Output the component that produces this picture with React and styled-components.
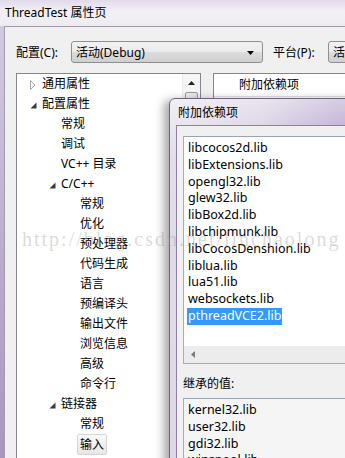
import React from 'react';
import styled, { createGlobalStyle } from 'styled-components';

const GlobalStyle = createGlobalStyle`
  html, body {
    margin: 0;
    padding: 0;
  }
  body {
    font-family: "Noto Sans", "Noto Sans CJK SC", sans-serif;
    font-size: 12px;
    color: #000000;
  }
`;

const Screen = styled.div`
  position: relative;
  width: 345px;
  height: 458px;
  overflow: hidden;
`;

const Window = styled.div`
  display: flex;
  flex-direction: column;
  height: 100%;
  background: linear-gradient(180deg, #d6cde0 0%, #b9aacb 60%, #a897bd 100%);
`;

const TitleBar = styled.div`
  height: 26px;
  flex-shrink: 0;
  padding-left: 5px;
  line-height: 26px;
  font-size: 12px;
  background: linear-gradient(180deg, #e2d9ea 0%, #f3f1f5 45%, #eeebf1 100%);
`;

const Client = styled.div`
  flex: 1;
  display: flex;
  flex-direction: column;
  margin-left: 4px;
  padding: 13px 0 0 11px;
  background: #f0f0f0;
  border-top: 1px solid #a39cab;
  border-left: 1px solid #a39cab;
  min-height: 0;
`;

const ConfigRow = styled.div`
  display: flex;
  align-items: center;
  height: 24px;
  flex-shrink: 0;
`;

const FieldLabel = styled.span`
  width: ${p => p.$width}px;
  flex-shrink: 0;
`;

const Combo = styled.div`
  position: relative;
  width: ${p => p.$width}px;
  height: 22px;
  flex-shrink: 0;
  margin-right: ${p => p.$gap || 0}px;
  display: flex;
  align-items: center;
  padding-left: 4px;
  box-sizing: border-box;
  border: 1px solid #8e8f8f;
  border-radius: 3px;
  background: linear-gradient(180deg, #f2f2f2 0%, #ebebeb 50%, #dddddd 51%, #cfcfcf 100%);
`;

const ComboArrow = styled.svg`
  position: absolute;
  right: 8px;
  top: 9px;
`;

const Body = styled.div`
  flex: 1;
  display: flex;
  gap: 12px;
  margin-top: 9px;
  min-height: 0;
`;

const Tree = styled.div`
  width: 185px;
  flex-shrink: 0;
  display: flex;
  box-sizing: border-box;
  border: 1px solid #828790;
  border-bottom: none;
  background: #ffffff;
`;

const TreeList = styled.div`
  flex: 1;
`;

const TreeRow = styled.div`
  display: flex;
  align-items: center;
  height: 20px;
  padding-left: ${p => 13 + p.$level * 19}px;
`;

const Toggle = styled.span`
  width: 12px;
  flex-shrink: 0;
  display: flex;
  align-items: center;
  padding-top: ${p => (p.$open ? 3 : 1)}px;
`;

const NodeText = styled.span`
  line-height: 20px;
  white-space: nowrap;
  ${p => p.$selected && `
    margin-left: -3px;
    padding: 0 2px;
    line-height: 19px;
    border: 1px solid #d6d6d6;
    border-radius: 2px;
    background: linear-gradient(180deg, #fafafa 0%, #e6e6e6 100%);
  `}
`;

const VScroll = styled.div`
  width: 17px;
  flex-shrink: 0;
  display: flex;
  flex-direction: column;
  align-items: center;
  background: #f5f5f5;
  border-left: 1px solid #ececec;
`;

const ScrollButton = styled.div`
  width: 17px;
  height: 18px;
  display: flex;
  align-items: center;
  justify-content: center;
`;

const Thumb = styled.div`
  width: 11px;
  height: 220px;
  border: 1px solid #9a9a9a;
  border-radius: 2px;
  background: linear-gradient(90deg, #f1f1f1 0%, #e4e4e4 100%);
`;

const RightPanel = styled.div`
  flex: 1;
  min-width: 200px;
  box-sizing: border-box;
  border: 1px solid #828790;
  border-bottom: none;
  background: #ffffff;
`;

const PanelHeader = styled.div`
  height: 22px;
  line-height: 22px;
  padding-left: 25px;
  border-bottom: 1px solid #e3e3e3;
`;

const Dialog = styled.div`
  position: absolute;
  left: 169px;
  top: 98px;
  width: 200px;
  height: 380px;
  display: flex;
  flex-direction: column;
  border-radius: 6px 0 0 0;
  border: 1px solid #6f6480;
  background:
    linear-gradient(180deg, rgba(255, 255, 255, 0.5) 0px, rgba(255, 255, 255, 0) 60px),
    linear-gradient(95deg, #e4dfeb 0%, #d3c9df 40%, #b29ec9 72%, #a48ac1 100%);
  box-shadow: -5px 2px 10px rgba(0, 0, 0, 0.35);
`;

const DialogTitle = styled.div`
  height: 26px;
  flex-shrink: 0;
  line-height: 28px;
  padding-left: 8px;
`;

const DialogClient = styled.div`
  flex: 1;
  margin-left: 6px;
  padding: 10px 0 0 6px;
  background: #f0f0f0;
  border-top: 1px solid #8d80a0;
  border-left: 1px solid #8d80a0;
`;

const TextBox = styled.div`
  height: ${p => p.$height}px;
  box-sizing: border-box;
  display: flex;
  flex-direction: column;
  border: 1px solid #abadb3;
  border-top-color: #9aa3b0;
  background: ${p => (p.$readOnly ? '#f5f5f5' : '#ffffff')};
`;

const Lines = styled.div`
  flex: 1;
  padding: 3px 0 0 4px;
`;

const Line = styled.div`
  height: 16.8px;
  line-height: 16.8px;
  font-size: 12.5px;
  white-space: nowrap;
`;

const Highlight = styled.span`
  display: inline-block;
  margin-left: -1px;
  padding: 0 1px;
  color: #ffffff;
  background: #3399ff;
`;

const HScroll = styled.div`
  height: 17px;
  display: flex;
  align-items: center;
  background: #ececec;
`;

const SectionLabel = styled.div`
  margin-top: 10px;
  line-height: 20px;
`;

const InheritedBox = styled(TextBox)`
  margin-top: 4px;
`;

const Watermark = styled.div`
  position: absolute;
  left: 22px;
  top: 229px;
  font-family: "Liberation Serif", serif;
  font-size: 20px;
  line-height: 20px;
  letter-spacing: 2px;
  color: rgba(140, 140, 140, 0.32);
  white-space: nowrap;
  pointer-events: none;
`;

const tree = [
  { level: 0, text: '通用属性', toggle: 'closed' },
  { level: 0, text: '配置属性', toggle: 'open' },
  { level: 1, text: '常规' },
  { level: 1, text: '调试' },
  { level: 1, text: 'VC++ 目录' },
  { level: 1, text: 'C/C++', toggle: 'open' },
  { level: 2, text: '常规' },
  { level: 2, text: '优化' },
  { level: 2, text: '预处理器' },
  { level: 2, text: '代码生成' },
  { level: 2, text: '语言' },
  { level: 2, text: '预编译头' },
  { level: 2, text: '输出文件' },
  { level: 2, text: '浏览信息' },
  { level: 2, text: '高级' },
  { level: 2, text: '命令行' },
  { level: 1, text: '链接器', toggle: 'open' },
  { level: 2, text: '常规' },
  { level: 2, text: '输入', selected: true },
];

const deps = [
  'libcocos2d.lib',
  'libExtensions.lib',
  'opengl32.lib',
  'glew32.lib',
  'libBox2d.lib',
  'libchipmunk.lib',
  'libCocosDenshion.lib',
  'liblua.lib',
  'lua51.lib',
  'websockets.lib',
];

const inherited = ['kernel32.lib', 'user32.lib', 'gdi32.lib', 'winspool.lib'];

const Triangle = ({ open }) =>
  open ? (
    <svg width="7" height="7" viewBox="0 0 7 7">
      <polygon points="6.5,0.5 6.5,6.5 0.5,6.5" fill="#3a3a3a" />
    </svg>
  ) : (
    <svg width="6" height="10" viewBox="0 0 6 10">
      <polygon points="0.5,0.5 5,5 0.5,9.5" fill="#ffffff" stroke="#a7a7a7" />
    </svg>
  );

const App = () => (
  <Screen>
    <GlobalStyle />
    <Window>
      <TitleBar>ThreadTest 属性页</TitleBar>
      <Client>
        <ConfigRow>
          <FieldLabel $width={55}>配置(C):</FieldLabel>
          <Combo $width={192} $gap={10}>
            活动(Debug)
            <ComboArrow width="7" height="4" viewBox="0 0 7 4">
              <polygon points="0,0 7,0 3.5,4" fill="#000000" />
            </ComboArrow>
          </Combo>
          <FieldLabel $width={55}>平台(P):</FieldLabel>
          <Combo $width={100}>活动(Win32)</Combo>
        </ConfigRow>

        <Body>
          <Tree>
            <TreeList>
              {tree.map((node, i) => (
                <TreeRow key={i} $level={node.level}>
                  <Toggle $open={node.toggle === 'open'}>
                    {node.toggle && <Triangle open={node.toggle === 'open'} />}
                  </Toggle>
                  <NodeText $selected={node.selected}>{node.text}</NodeText>
                </TreeRow>
              ))}
            </TreeList>
            <VScroll>
              <ScrollButton>
                <svg width="7" height="4" viewBox="0 0 7 4">
                  <polygon points="3.5,0 7,4 0,4" fill="#202020" />
                </svg>
              </ScrollButton>
              <Thumb />
            </VScroll>
          </Tree>
          <RightPanel>
            <PanelHeader>附加依赖项</PanelHeader>
          </RightPanel>
        </Body>
      </Client>
    </Window>

    <Dialog>
      <DialogTitle>附加依赖项</DialogTitle>
      <DialogClient>
        <TextBox $height={228}>
          <Lines>
            {deps.map(d => (
              <Line key={d}>{d}</Line>
            ))}
            <Line>
              <Highlight>pthreadVCE2.lib</Highlight>
            </Line>
          </Lines>
          <HScroll>
            <ScrollButton>
              <svg width="4" height="7" viewBox="0 0 4 7">
                <polygon points="0,3.5 4,0 4,7" fill="#7a7a7a" />
              </svg>
            </ScrollButton>
          </HScroll>
        </TextBox>
        <SectionLabel>继承的值:</SectionLabel>
        <InheritedBox $height={100} $readOnly>
          <Lines>
            {inherited.map(d => (
              <Line key={d}>{d}</Line>
            ))}
          </Lines>
        </InheritedBox>
      </DialogClient>
    </Dialog>

    <Watermark>http://blog.csdn.net/linchaolong</Watermark>
  </Screen>
);

export default App;
